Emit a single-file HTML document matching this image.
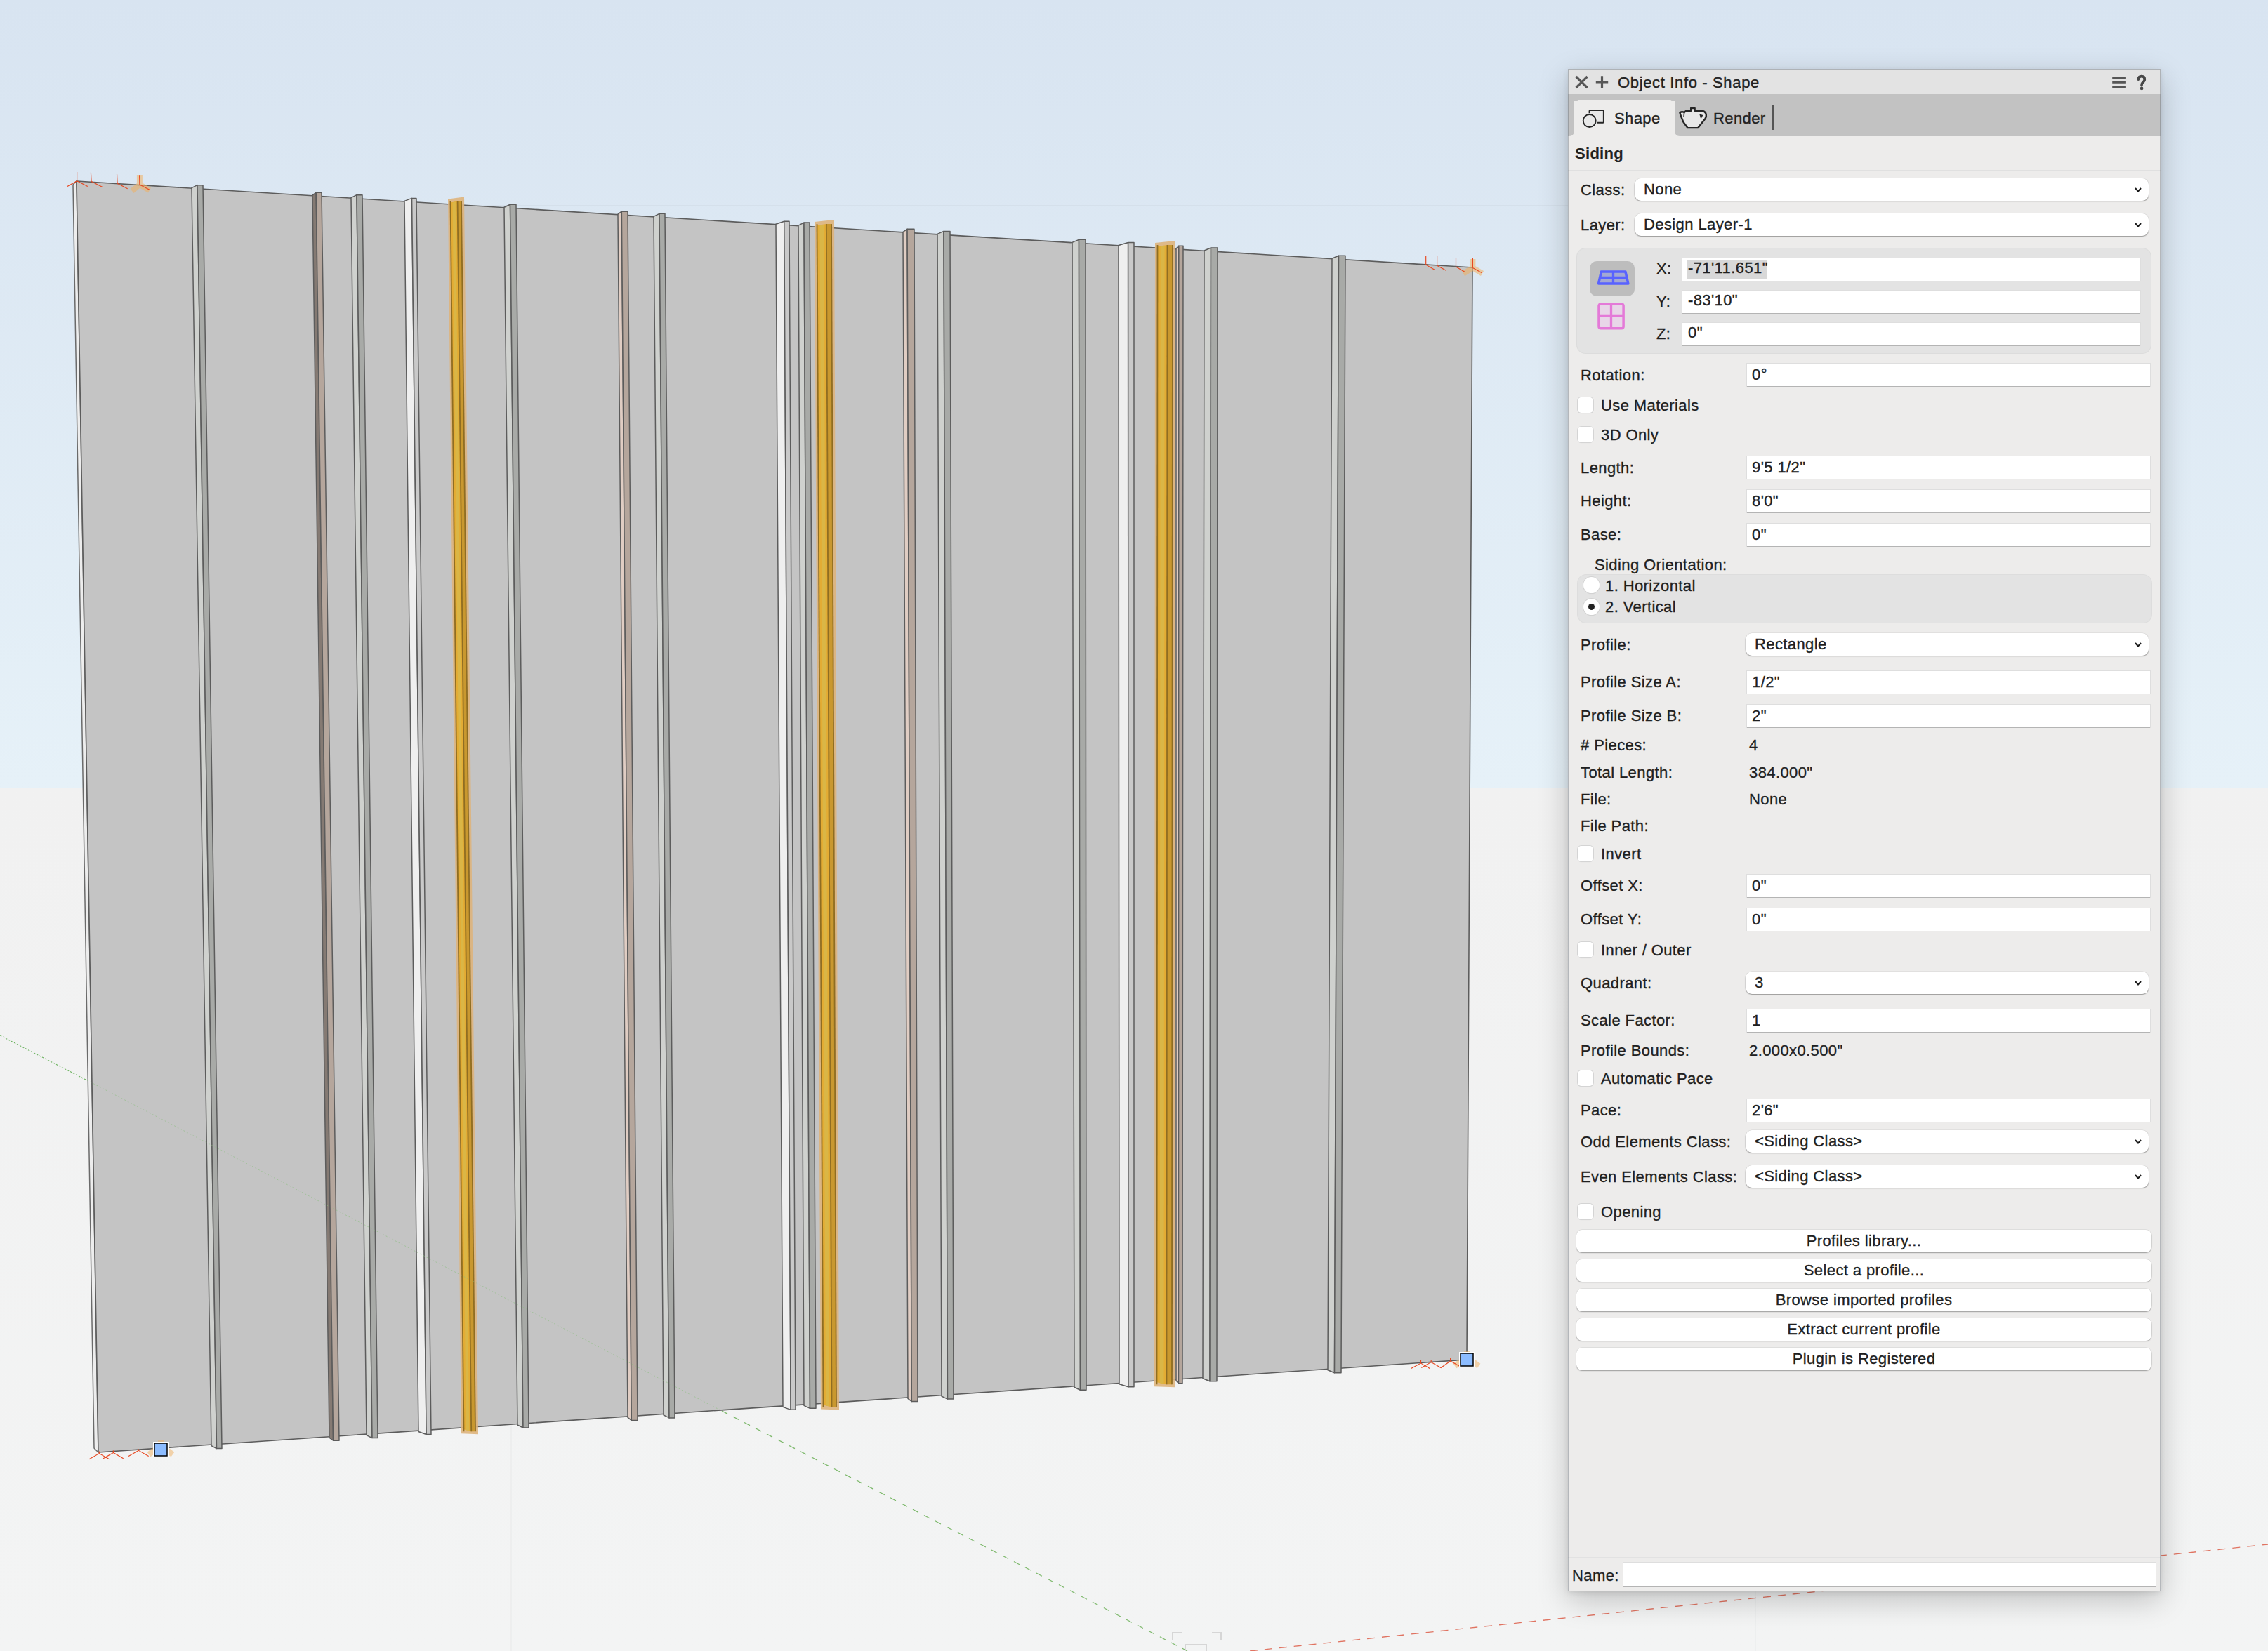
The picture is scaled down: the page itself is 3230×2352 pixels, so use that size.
<!DOCTYPE html>
<html><head><meta charset="utf-8">
<style>
html,body{margin:0;padding:0;}
body{width:3230px;height:2352px;position:relative;overflow:hidden;font-family:"Liberation Sans",sans-serif;color:#1f1f1f;
background:linear-gradient(to bottom,#d8e4f1 0px,#e6f1f8 1123px,#f1f1f1 1123px,#f3f4f4 2352px);}
.a{position:absolute;}
#panel{position:absolute;left:2233px;top:99px;width:844px;height:2168px;background:#edeceb;box-shadow:0 12px 40px rgba(0,0,0,0.22),0 2px 8px rgba(0,0,0,0.10);}
.t{position:absolute;font-size:22px;line-height:22px;white-space:nowrap;letter-spacing:0.4px;-webkit-text-stroke:0.35px currentColor;}
.fld{position:absolute;background:#fff;box-shadow:0 1px 0 #b4b4b4,0 0 0 1px #dedede;}
.dd{position:absolute;background:#fff;border-radius:9px;box-shadow:0 1px 1.5px rgba(0,0,0,0.35),0 0 0 0.5px rgba(0,0,0,0.08);}
.cb{position:absolute;width:22px;height:22px;background:#fff;border-radius:5px;box-shadow:0 0 0 1px #d4d4d4,0 1px 1px rgba(0,0,0,0.12);}
.btn{position:absolute;left:12px;width:819px;height:32px;background:#fff;border-radius:8px;box-shadow:0 1px 1.5px rgba(0,0,0,0.3),0 0 0 0.5px rgba(0,0,0,0.1);}
.btn span{position:absolute;left:0;right:0;top:5px;text-align:center;font-size:22px;line-height:22px;letter-spacing:0.4px;-webkit-text-stroke:0.35px currentColor;}
.chev{position:absolute;width:10px;height:7px;}
</style></head><body>
<svg width="3230" height="2352" style="position:absolute;left:0;top:0">
<line x1="640" y1="292.5" x2="2240" y2="292.5" stroke="#d5e0eb" stroke-width="1"/>
<line x1="0" y1="1475" x2="124" y2="1539" stroke="#70b464" stroke-width="1.1" stroke-dasharray="2.5,2"/>
<line x1="728" y1="2030" x2="728" y2="2352" stroke="#e8e9e9" stroke-width="1"/>
<line x1="2500" y1="2250" x2="2500" y2="2352" stroke="#e8e9e9" stroke-width="1"/>
<line x1="1028" y1="2010" x2="1691" y2="2352" stroke="#7cb86a" stroke-width="1.2" stroke-dasharray="9,9"/>
<line x1="1780" y1="2352" x2="3230" y2="2200" stroke="#e07462" stroke-width="1.35" stroke-dasharray="11,10"/>
<path d="M1670 2337 V2326 H1683 M1726 2326 H1739 V2337 M1688 2352 V2343 H1718 V2352" fill="none" stroke="#d6d6d6" stroke-width="2"/>
<polygon points="104,263 109,258 140,2069 134,2063" fill="#ededed" stroke="#6a6a6a" stroke-width="1.5" stroke-linejoin="round"/>
<polygon points="109,258 2097,381 2089,1937 140,2069" fill="#c4c4c4" stroke="#5c5c5c" stroke-width="1.6" stroke-linejoin="round"/>
<polygon points="273,267.6418511066398 281.0,263.6418511066398 308.5,2063.587993842996 301,2059.587993842996" fill="#cfd1ce" stroke="#5c5c5c" stroke-width="1.5" stroke-linejoin="round"/>
<polygon points="281.0,263.6418511066398 289,263.6418511066398 316,2063.587993842996 308.5,2063.587993842996" fill="#a8aaa7" stroke="#5c5c5c" stroke-width="1.5" stroke-linejoin="round"/>
<polygon points="445,278.1908953722334 450.2,274.1908953722334 474.6,2052.2437147255005 469,2048.2437147255005" fill="#857a73" stroke="#5c5c5c" stroke-width="1.5" stroke-linejoin="round"/>
<polygon points="450.2,274.1908953722334 458,274.1908953722334 483,2052.2437147255005 474.6,2052.2437147255005" fill="#b5a69c" stroke="#5c5c5c" stroke-width="1.5" stroke-linejoin="round"/>
<polygon points="500,281.6866197183099 508.0,277.6866197183099 530.0,2048.5864545920986 522,2044.5864545920986" fill="#cfd1ce" stroke="#5c5c5c" stroke-width="1.5" stroke-linejoin="round"/>
<polygon points="508.0,277.6866197183099 516,277.6866197183099 538,2048.5864545920986 530.0,2048.5864545920986" fill="#a8aaa7" stroke="#5c5c5c" stroke-width="1.5" stroke-linejoin="round"/>
<polygon points="576,286.41976861167 586.54,282.41976861167 607.16,2043.5069266290404 596,2039.5069266290404" fill="#efefef" stroke="#5c5c5c" stroke-width="1.5" stroke-linejoin="round"/>
<polygon points="586.54,282.41976861167 593,282.41976861167 614,2043.5069266290404 607.16,2043.5069266290404" fill="#c9c9c9" stroke="#5c5c5c" stroke-width="1.5" stroke-linejoin="round"/>
<polygon points="638,283.44139839034204 661,280.44139839034204 681,2043.1723961005644 657,2042.1723961005644" fill="#deb47c" opacity="0.9"/>
<polygon points="641.5,288.44139839034204 651.575,286.44139839034204 671.225,2039.1723961005644 660.5,2036.1723961005644" fill="#e3ac34"/>
<polygon points="644.5225,288.44139839034204 648.754,287.44139839034204 668.222,2038.1723961005644 663.7175,2037.1723961005644" fill="#dab646"/>
<polygon points="651.575,286.44139839034204 657,286.44139839034204 677,2039.1723961005644 671.225,2039.1723961005644" fill="#c9982f"/>
<line x1="641.5" y1="286.44139839034204" x2="660.5" y2="2039.1723961005644" stroke="#8f6d22" stroke-width="1.8"/>
<line x1="651.575" y1="286.44139839034204" x2="671.225" y2="2039.1723961005644" stroke="#8f6d22" stroke-width="1.8"/>
<line x1="657" y1="286.44139839034204" x2="677" y2="2039.1723961005644" stroke="#8f6d22" stroke-width="1.8"/>
<polygon points="718,295.2054828973843 726.5,291.2054828973843 745.0,2034.025141097999 737,2030.025141097999" fill="#cfd1ce" stroke="#5c5c5c" stroke-width="1.5" stroke-linejoin="round"/>
<polygon points="726.5,291.2054828973843 735,291.2054828973843 753,2034.025141097999 745.0,2034.025141097999" fill="#a8aaa7" stroke="#5c5c5c" stroke-width="1.5" stroke-linejoin="round"/>
<polygon points="880,305.135814889336 885.32,301.135814889336 899.32,2023.4597229348383 894,2019.4597229348383" fill="#e0cdc3" stroke="#5c5c5c" stroke-width="1.5" stroke-linejoin="round"/>
<polygon points="885.32,301.135814889336 894,301.135814889336 908,2023.4597229348383 899.32,2023.4597229348383" fill="#b5a69c" stroke="#5c5c5c" stroke-width="1.5" stroke-linejoin="round"/>
<polygon points="931,308.3531187122736 939.0,304.3531187122736 953.0,2019.9379168804514 945,2015.9379168804514" fill="#cfd1ce" stroke="#5c5c5c" stroke-width="1.5" stroke-linejoin="round"/>
<polygon points="939.0,304.3531187122736 947,304.3531187122736 961,2019.9379168804514 953.0,2019.9379168804514" fill="#a8aaa7" stroke="#5c5c5c" stroke-width="1.5" stroke-linejoin="round"/>
<polygon points="1105,319.21151911468814 1116.78,315.21151911468814 1126.16,2008.3565931246794 1115,2004.3565931246794" fill="#efefef" stroke="#5c5c5c" stroke-width="1.5" stroke-linejoin="round"/>
<polygon points="1116.78,315.21151911468814 1124,315.21151911468814 1133,2008.3565931246794 1126.16,2008.3565931246794" fill="#c9c9c9" stroke="#5c5c5c" stroke-width="1.5" stroke-linejoin="round"/>
<polygon points="1137,321.09859154929575 1145.0,317.09859154929575 1153.5,2006.3586454592098 1145,2002.3586454592098" fill="#cfd1ce" stroke="#5c5c5c" stroke-width="1.5" stroke-linejoin="round"/>
<polygon points="1145.0,317.09859154929575 1153,317.09859154929575 1162,2006.3586454592098 1153.5,2006.3586454592098" fill="#a8aaa7" stroke="#5c5c5c" stroke-width="1.5" stroke-linejoin="round"/>
<polygon points="1160,315.8928571428571 1188,312.8928571428571 1195,2008.4284248332478 1169,2007.4284248332478" fill="#deb47c" opacity="0.9"/>
<polygon points="1163.5,320.8928571428571 1176.825,318.8928571428571 1184.525,2004.4284248332478 1172.5,2001.4284248332478" fill="#e3ac34"/>
<polygon points="1167.4975,320.8928571428571 1173.094,319.8928571428571 1181.1580000000001,2003.4284248332478 1176.1075,2002.4284248332478" fill="#dab646"/>
<polygon points="1176.825,318.8928571428571 1184,318.8928571428571 1191,2004.4284248332478 1184.525,2004.4284248332478" fill="#c9982f"/>
<line x1="1163.5" y1="318.8928571428571" x2="1172.5" y2="2004.4284248332478" stroke="#8f6d22" stroke-width="1.8"/>
<line x1="1176.825" y1="318.8928571428571" x2="1184.525" y2="2004.4284248332478" stroke="#8f6d22" stroke-width="1.8"/>
<line x1="1184" y1="318.8928571428571" x2="1191" y2="2004.4284248332478" stroke="#8f6d22" stroke-width="1.8"/>
<polygon points="1286,330.3174044265594 1292.08,326.3174044265594 1298.32,1996.4366341713699 1293,1992.4366341713699" fill="#e0cdc3" stroke="#5c5c5c" stroke-width="1.5" stroke-linejoin="round"/>
<polygon points="1292.08,326.3174044265594 1302,326.3174044265594 1307,1996.4366341713699 1298.32,1996.4366341713699" fill="#b5a69c" stroke="#5c5c5c" stroke-width="1.5" stroke-linejoin="round"/>
<polygon points="1335,333.41096579476863 1344.0,329.41096579476863 1349.5,1993.0841457157517 1341,1989.0841457157517" fill="#cfd1ce" stroke="#5c5c5c" stroke-width="1.5" stroke-linejoin="round"/>
<polygon points="1344.0,329.41096579476863 1353,329.41096579476863 1358,1993.0841457157517 1349.5,1993.0841457157517" fill="#a8aaa7" stroke="#5c5c5c" stroke-width="1.5" stroke-linejoin="round"/>
<polygon points="1527,345.32117706237426 1536.5,341.32117706237426 1538.5,1980.2837352488455 1530,1976.2837352488455" fill="#cfd1ce" stroke="#5c5c5c" stroke-width="1.5" stroke-linejoin="round"/>
<polygon points="1536.5,341.32117706237426 1546,341.32117706237426 1547,1980.2837352488455 1538.5,1980.2837352488455" fill="#a8aaa7" stroke="#5c5c5c" stroke-width="1.5" stroke-linejoin="round"/>
<polygon points="1593,349.4974849094567 1606.64,345.4974849094567 1607.02,1975.8137506413545 1594,1971.8137506413545" fill="#efefef" stroke="#5c5c5c" stroke-width="1.5" stroke-linejoin="round"/>
<polygon points="1606.64,345.4974849094567 1615,345.4974849094567 1615,1975.8137506413545 1607.02,1975.8137506413545" fill="#c9c9c9" stroke="#5c5c5c" stroke-width="1.5" stroke-linejoin="round"/>
<polygon points="1645,345.931338028169 1674,342.931338028169 1673,1976.1564905079529 1644,1975.1564905079529" fill="#deb47c" opacity="0.9"/>
<polygon points="1648.5,350.931338028169 1662.475,348.931338028169 1661.475,1972.1564905079529 1647.5,1969.1564905079529" fill="#e3ac34"/>
<polygon points="1652.6924999999999,350.931338028169 1658.562,349.931338028169 1657.562,1971.1564905079529 1651.6924999999999,1970.1564905079529" fill="#dab646"/>
<polygon points="1662.475,348.931338028169 1670,348.931338028169 1669,1972.1564905079529 1661.475,1972.1564905079529" fill="#c9982f"/>
<line x1="1648.5" y1="348.931338028169" x2="1647.5" y2="1972.1564905079529" stroke="#8f6d22" stroke-width="1.8"/>
<line x1="1662.475" y1="348.931338028169" x2="1661.475" y2="1972.1564905079529" stroke="#8f6d22" stroke-width="1.8"/>
<line x1="1670" y1="348.931338028169" x2="1669" y2="1972.1564905079529" stroke="#8f6d22" stroke-width="1.8"/>
<polygon points="1675,354.1996981891348 1678.8,350.1996981891348 1678.42,1970.7342226782966 1675,1966.7342226782966" fill="#e0cdc3" stroke="#5c5c5c" stroke-width="1.5" stroke-linejoin="round"/>
<polygon points="1678.8,350.1996981891348 1685,350.1996981891348 1684,1970.7342226782966 1678.42,1970.7342226782966" fill="#b5a69c" stroke="#5c5c5c" stroke-width="1.5" stroke-linejoin="round"/>
<polygon points="1715,356.95296780684106 1724.5,352.95296780684106 1723.0,1967.788096459723 1713,1963.788096459723" fill="#cfd1ce" stroke="#5c5c5c" stroke-width="1.5" stroke-linejoin="round"/>
<polygon points="1724.5,352.95296780684106 1734,352.95296780684106 1733,1967.788096459723 1723.0,1967.788096459723" fill="#a8aaa7" stroke="#5c5c5c" stroke-width="1.5" stroke-linejoin="round"/>
<polygon points="1897,368.2135311871227 1906.5,364.2135311871227 1900.5,1955.7665469471524 1891,1951.7665469471524" fill="#cfd1ce" stroke="#5c5c5c" stroke-width="1.5" stroke-linejoin="round"/>
<polygon points="1906.5,364.2135311871227 1916,364.2135311871227 1910,1955.7665469471524 1900.5,1955.7665469471524" fill="#a8aaa7" stroke="#5c5c5c" stroke-width="1.5" stroke-linejoin="round"/>
<line x1="124" y1="1539" x2="1028" y2="2010" stroke="#8cc080" stroke-width="1" stroke-dasharray="2,3" opacity="0.6"/>
<path d="M198.9 250 V263.7 M198.9 263 L213 271 M198.9 263 L188 272" stroke="#f0b060" stroke-width="8" opacity="0.55" fill="none"/>
<path d="M2097.4 369 V381.4 M2097.4 381.4 L2111 389.5 M2097.4 381.4 L2084 390" stroke="#f0b060" stroke-width="8" opacity="0.55" fill="none"/>
<path d="M2072 1946 L2080 1940 M2106 1946 L2098 1940 M2089 1925 V1930" stroke="#f0b060" stroke-width="8" opacity="0.5" fill="none"/>
<path d="M212 2072 L220 2066 M246 2072 L238 2066 M229 2052 V2056" stroke="#f0b060" stroke-width="8" opacity="0.5" fill="none"/>
<path d="M109.6 257.7 V245.1 M109.6 257.7 L96 265.6 M109.6 257.7 L124.8 265.6 M130.1 258.6 L129.4 245.8 M130.1 258.6 L146 266.6 M167.1 261.3 L166.5 247.8 M167.1 261.3 L181.7 268.7 M198.9 263 L198.6 250.2 M198.9 263 L213.4 270.5 M2030.7 377.1 V363.9 M2030.7 377.1 L2043.9 384.8 M2046.6 378.2 V365 M2046.6 378.2 L2059.8 385.6 M2073.5 380.1 V366.9 M2073.5 380.1 L2086.8 387.7 M2097.4 381.4 V368.1 M2097.4 381.4 L2110.6 388.8 M2009.2 1949.7 L2023.5 1942.1 L2036.6 1949.7 M2023.5 1942.1 V1938 M2024.3 1948.5 L2038.2 1940.6 L2052.1 1948.5 L2065.6 1939 L2079 1946.5 M2038.2 1940.6 V1937 M2065.6 1939 V1935 M127 2078.7 L141.3 2070.6 L155.6 2078.7 M141.3 2070.6 V2067.5 M147.1 2077.7 L161.4 2069.5 L175.7 2077.7 M161.4 2069.5 V2066.5 M183.1 2074.5 L197.4 2066.3 L211.7 2074.5 M197.4 2066.3 V2064.5" stroke="#e8461e" stroke-width="1.15" fill="none"/>
<rect x="218" y="2054" width="22" height="22" fill="#fff"/>
<rect x="220" y="2056" width="18" height="18" fill="#8cbcff" stroke="#000" stroke-width="1.5"/>
<rect x="2078" y="1926" width="22" height="22" fill="#fff"/>
<rect x="2080" y="1928" width="18" height="18" fill="#8cbcff" stroke="#000" stroke-width="1.5"/>
</svg><div id="panel">
 <!-- title bar -->
 <div class="a" style="left:0;top:0;width:844px;height:35px;background:#e3e3e3"></div>
 <svg class="a" style="left:10px;top:8px" width="20" height="20" viewBox="0 0 20 20"><path d="M1.6 2 L17.6 18 M17.6 2 L1.6 18" stroke="#575757" stroke-width="3.2"/></svg>
 <svg class="a" style="left:38px;top:8px" width="20" height="20" viewBox="0 0 20 20"><path d="M10.5 1.3 V18.3 M1.8 9.8 H19.2" stroke="#575757" stroke-width="3.2"/></svg>
 <div class="t" style="left:71px;top:8px;letter-spacing:0.65px;color:#222;-webkit-text-stroke:0.4px #222">Object Info - Shape</div>
 <svg class="a" style="left:772px;top:6px" width="26" height="24" viewBox="0 0 26 24"><path d="M3.2 5.6 H22.9 M3.2 12.4 H22.9 M3.2 19.4 H22.9" stroke="#565656" stroke-width="2.9"/></svg>
 <svg class="a" style="left:806px;top:6px" width="22" height="26" viewBox="0 0 22 26"><path d="M6.3 8.2 Q6.6 3.6 10.9 3.6 Q15.3 3.6 15.3 7.8 Q15.3 10.5 12.6 12.4 Q11 13.6 11 16.6" fill="none" stroke="#474747" stroke-width="3.7" stroke-linecap="round"/><circle cx="11.1" cy="20.9" r="2.3" fill="#474747"/></svg>
 <!-- tab bar -->
 <div class="a" style="left:0;top:35px;width:844px;height:10px;background:#c2c2c2"></div>
 <div class="a" style="left:0;top:35px;width:9px;height:60px;background:#c2c2c2;border-bottom-right-radius:7px"></div>
 <div class="a" style="left:152px;top:35px;width:692px;height:60px;background:#c2c2c2;border-bottom-left-radius:7px"></div>
 <div class="a" style="left:9px;top:43px;width:143px;height:52px;background:#edeceb;border-radius:10px 10px 0 0"></div>
 <svg class="a" style="left:18px;top:53px" width="40" height="36" viewBox="0 0 40 36"><rect x="12.6" y="4.9" width="20.3" height="17.9" rx="1" fill="#e8e8e8" stroke="#262626" stroke-width="2.05"/><circle cx="12.7" cy="20" r="9.6" fill="#ececec" stroke="#ececec" stroke-width="2.5"/><circle cx="12.7" cy="20" r="9" fill="#e8e8e8" stroke="#262626" stroke-width="1.95"/></svg>
 <div class="t" style="left:66px;top:59px;color:#222">Shape</div>
 <svg class="a" style="left:155px;top:50px" width="48" height="38" viewBox="0 0 48 38"><path d="M4.4 11.3 Q7.5 9.6 10.6 10.9 L13.4 8.8 H20.2 V5 H25.6 V8.8 H35.2 Q39.3 8.8 41.2 12.2 Q43 16.5 40.1 20.5 L30.3 33.1 H15.5 L9.3 24.6 L5.2 14.5 Z" fill="#e8e8e8" stroke="#262626" stroke-width="2.45" stroke-linejoin="round"/><path d="M10.6 11.2 L10.1 17" stroke="#262626" stroke-width="1.6"/><path d="M32.2 13.2 L37.3 15.1 L34.4 20.8 Z" fill="#262626"/></svg>
 <div class="t" style="left:207px;top:59px;color:#222">Render</div>
 <div class="a" style="left:291px;top:51px;width:2px;height:35px;background:#555"></div>
 <!-- siding -->
 <div class="t" style="left:10px;top:108.5px;font-weight:bold;color:#222;letter-spacing:0.3px;-webkit-text-stroke:0.1px #222">Siding</div>
 <div class="a" style="left:0;top:143px;width:844px;height:2px;background:#e0e0e0"></div>
 <!-- class / layer -->
 <div class="t" style="left:18px;top:161.0px">Class:</div>
 <div class="dd" style="left:95px;top:155px;width:732px;height:32px"><span class="t" style="left:13px;top:5px">None</span><svg class="chev" style="left:712px;top:13px" viewBox="0 0 10 7"><path d="M1 1 L5 5.5 L9 1" fill="none" stroke="#1a1a1a" stroke-width="2"/></svg></div>
 <div class="t" style="left:18px;top:211.0px">Layer:</div>
 <div class="dd" style="left:95px;top:205px;width:732px;height:32px"><span class="t" style="left:13px;top:5px">Design Layer-1</span><svg class="chev" style="left:712px;top:13px" viewBox="0 0 10 7"><path d="M1 1 L5 5.5 L9 1" fill="none" stroke="#1a1a1a" stroke-width="2"/></svg></div>
 <!-- group box xyz -->
 <div class="a" style="left:13px;top:255px;width:817px;height:149px;background:#e3e3e3;border-radius:12px;box-shadow:0 0 0 1px #dcdcdc"></div>
 <div class="a" style="left:31px;top:273px;width:64px;height:50px;background:#bdbdbd;border-radius:10px"></div>
 <svg class="a" style="left:40px;top:283px" width="50" height="28" viewBox="0 0 50 28"><path d="M7.4 5 H41.9 L45.8 22 H3.6 Z" fill="#a3a8d3" stroke="#5862ff" stroke-width="3.5" stroke-linejoin="round"/><path d="M24.5 5 V22 M5.4 13.3 H44 " stroke="#5862ff" stroke-width="3.3"/></svg>
 <svg class="a" style="left:40px;top:330px" width="44" height="44" viewBox="0 0 44 44"><rect x="4" y="4" width="35.1" height="34.8" rx="2.5" fill="#e8d6e8" stroke="#e47ad8" stroke-width="3.5"/><path d="M21.5 4 V38.8 M4 21.4 H39.1" stroke="#e47ad8" stroke-width="3.3"/></svg>
 <div class="t" style="left:126px;top:273.0px">X:</div>
 <div class="fld" style="left:163px;top:269px;width:652px;height:32px"><div class="a" style="left:6px;top:2px;width:114px;height:27px;background:#d8d8d8"></div><span class="t" style="left:8px;top:3px">-71'11.651"</span></div>
 <div class="t" style="left:126px;top:320.0px">Y:</div>
 <div class="fld" style="left:163px;top:315px;width:652px;height:32px"><span class="t" style="left:8px;top:3px">-83'10"</span></div>
 <div class="t" style="left:126px;top:366.0px">Z:</div>
 <div class="fld" style="left:163px;top:361px;width:652px;height:32px"><span class="t" style="left:8px;top:3px">0"</span></div>
 <div class="t" style="left:18px;top:424.6px;">Rotation:</div>
 <div class="fld" style="left:255px;top:419px;width:574px;height:32px"><span class="t" style="left:7px;top:5px">0°</span></div>
 <div class="cb" style="left:14px;top:467px"></div>
 <div class="t" style="left:47px;top:468.4px">Use Materials</div>
 <div class="cb" style="left:14px;top:509px"></div>
 <div class="t" style="left:47px;top:510.4px">3D Only</div>
 <div class="t" style="left:18px;top:556.6px;">Length:</div>
 <div class="fld" style="left:255px;top:551px;width:574px;height:32px"><span class="t" style="left:7px;top:5px">9'5 1/2"</span></div>
 <div class="t" style="left:18px;top:604.4px;">Height:</div>
 <div class="fld" style="left:255px;top:599px;width:574px;height:32px"><span class="t" style="left:7px;top:5px">8'0"</span></div>
 <div class="t" style="left:18px;top:651.8px;">Base:</div>
 <div class="fld" style="left:255px;top:647px;width:574px;height:32px"><span class="t" style="left:7px;top:5px">0"</span></div>
 <div class="t" style="left:38px;top:694.7px;">Siding Orientation:</div>
 <div class="a" style="left:14px;top:719.5px;width:817px;height:68.5px;background:#e3e3e3;border-radius:12px;box-shadow:0 0 0 1px #dddddd"></div>
 <div class="a" style="left:21.7px;top:723px;width:23px;height:23px;border-radius:50%;background:#fff;box-shadow:0 0 0 1px #d2d2d2,0 1px 1px rgba(0,0,0,0.1)"></div>
 <div class="t" style="left:53px;top:725.0px;">1. Horizontal</div>
 <div class="a" style="left:21.7px;top:753.5px;width:23px;height:23px;border-radius:50%;background:#fff;box-shadow:0 0 0 1px #d2d2d2,0 1px 1px rgba(0,0,0,0.1)"></div>
 <div class="a" style="left:28.7px;top:760.5px;width:9px;height:9px;border-radius:50%;background:#222"></div>
 <div class="t" style="left:53px;top:754.8px;">2. Vertical</div>
 <div class="t" style="left:18px;top:808.9px;">Profile:</div>
 <div class="dd" style="left:253px;top:802.5px;width:574px;height:32px"><span class="t" style="left:13px;top:5px">Rectangle</span><svg class="chev" style="left:554px;top:13px" viewBox="0 0 10 7"><path d="M1 1 L5 5.5 L9 1" fill="none" stroke="#1a1a1a" stroke-width="2"/></svg></div>
 <div class="t" style="left:18px;top:862.2px;">Profile Size A:</div>
 <div class="fld" style="left:255px;top:856.5px;width:574px;height:32px"><span class="t" style="left:7px;top:5px">1/2"</span></div>
 <div class="t" style="left:18px;top:910.0px;">Profile Size B:</div>
 <div class="fld" style="left:255px;top:904.5px;width:574px;height:32px"><span class="t" style="left:7px;top:5px">2"</span></div>
 <div class="t" style="left:18px;top:952.4px;"># Pieces:</div>
 <div class="t" style="left:258px;top:952.4px;">4</div>
 <div class="t" style="left:18px;top:991.1px;">Total Length:</div>
 <div class="t" style="left:258px;top:991.1px;">384.000"</div>
 <div class="t" style="left:18px;top:1029.2px;">File:</div>
 <div class="t" style="left:258px;top:1029.2px;">None</div>
 <div class="t" style="left:18px;top:1066.7px;">File Path:</div>
 <div class="cb" style="left:14px;top:1105.5px"></div>
 <div class="t" style="left:47px;top:1106.9px">Invert</div>
 <div class="t" style="left:18px;top:1152.4px;">Offset X:</div>
 <div class="fld" style="left:255px;top:1147px;width:574px;height:32px"><span class="t" style="left:7px;top:5px">0"</span></div>
 <div class="t" style="left:18px;top:1200.4px;">Offset Y:</div>
 <div class="fld" style="left:255px;top:1195px;width:574px;height:32px"><span class="t" style="left:7px;top:5px">0"</span></div>
 <div class="cb" style="left:14px;top:1243px"></div>
 <div class="t" style="left:47px;top:1244.4px">Inner / Outer</div>
 <div class="t" style="left:18px;top:1290.6px;">Quadrant:</div>
 <div class="dd" style="left:253px;top:1285px;width:574px;height:32px"><span class="t" style="left:13px;top:5px">3</span><svg class="chev" style="left:554px;top:13px" viewBox="0 0 10 7"><path d="M1 1 L5 5.5 L9 1" fill="none" stroke="#1a1a1a" stroke-width="2"/></svg></div>
 <div class="t" style="left:18px;top:1343.9px;">Scale Factor:</div>
 <div class="fld" style="left:255px;top:1339px;width:574px;height:32px"><span class="t" style="left:7px;top:5px">1</span></div>
 <div class="t" style="left:18px;top:1387.0px;">Profile Bounds:</div>
 <div class="t" style="left:258px;top:1387.0px;">2.000x0.500"</div>
 <div class="cb" style="left:14px;top:1425.5px"></div>
 <div class="t" style="left:47px;top:1426.9px">Automatic Pace</div>
 <div class="t" style="left:18px;top:1472.3px;">Pace:</div>
 <div class="fld" style="left:255px;top:1467px;width:574px;height:32px"><span class="t" style="left:7px;top:5px">2'6"</span></div>
 <div class="t" style="left:18px;top:1516.8px;">Odd Elements Class:</div>
 <div class="dd" style="left:253px;top:1511px;width:574px;height:32px"><span class="t" style="left:13px;top:5px">&lt;Siding Class&gt;</span><svg class="chev" style="left:554px;top:13px" viewBox="0 0 10 7"><path d="M1 1 L5 5.5 L9 1" fill="none" stroke="#1a1a1a" stroke-width="2"/></svg></div>
 <div class="t" style="left:18px;top:1567.0px;">Even Elements Class:</div>
 <div class="dd" style="left:253px;top:1561px;width:574px;height:32px"><span class="t" style="left:13px;top:5px">&lt;Siding Class&gt;</span><svg class="chev" style="left:554px;top:13px" viewBox="0 0 10 7"><path d="M1 1 L5 5.5 L9 1" fill="none" stroke="#1a1a1a" stroke-width="2"/></svg></div>
 <div class="cb" style="left:14px;top:1615.5px"></div>
 <div class="t" style="left:47px;top:1616.9px">Opening</div>
 <div class="btn" style="top:1653px"><span>Profiles library...</span></div>
 <div class="btn" style="top:1695px"><span>Select a profile...</span></div>
 <div class="btn" style="top:1737px"><span>Browse imported profiles</span></div>
 <div class="btn" style="top:1779px"><span>Extract current profile</span></div>
 <div class="btn" style="top:1821px"><span>Plugin is Registered</span></div>
 <div class="a" style="left:0;top:2119px;width:844px;height:2px;background:#e2e2e2"></div>
 <div class="t" style="left:6px;top:2134.8px;">Name:</div>
 <div class="fld" style="left:79px;top:2127px;width:758px;height:34px"></div>
 <div class="a" style="left:0;top:0;width:844px;height:2168px;box-shadow:inset 0 0 0 1px rgba(95,105,115,0.4)"></div>
</div>

</body></html>
